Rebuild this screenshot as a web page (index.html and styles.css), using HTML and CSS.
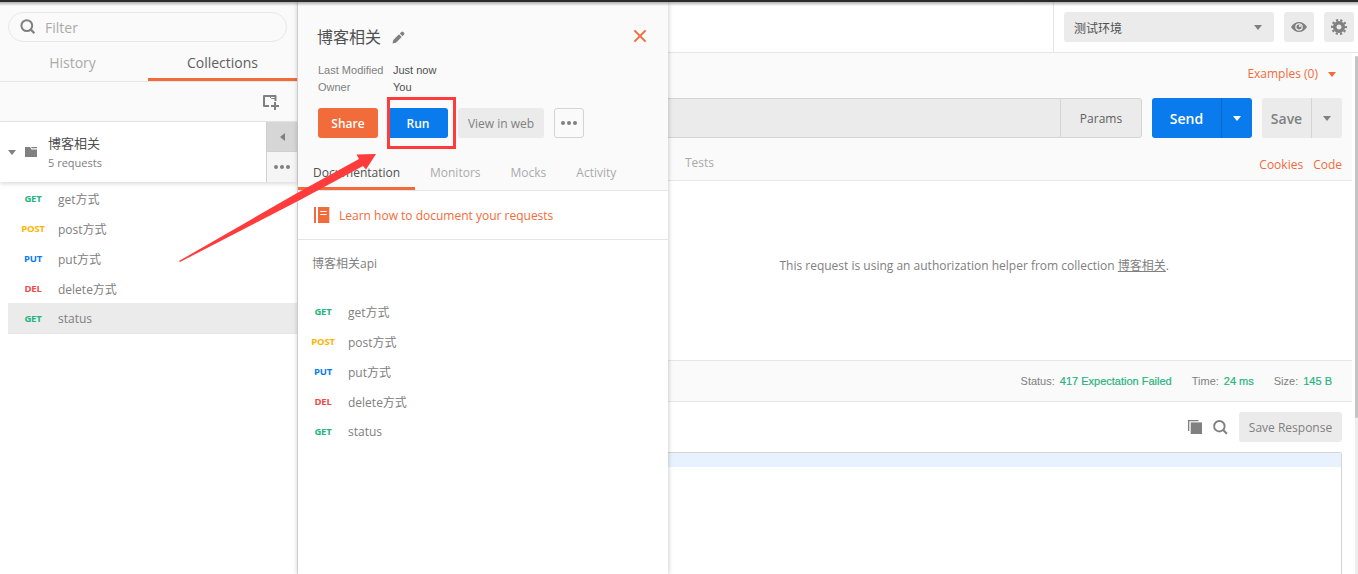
FILE: index.html
```
<!DOCTYPE html>
<html lang="zh">

<head>
  <meta charset="utf-8">
  <title>Collections</title>
  <link rel="stylesheet" href="styles.css">
</head>

<body>
  <div class="app">

    <div class="sidebar">
      <div class="filter">
        <svg width="16" height="16" viewBox="0 0 16 16"><circle cx="6.8" cy="6.6" r="5.4" fill="none" stroke="#808080" stroke-width="2"/><path d="M10.6 10.4L14.4 14.2" stroke="#808080" stroke-width="2.2"/></svg>
        <span>Filter</span>
      </div>
      <div class="sidebar-tabs">
        <div class="sidebar-tab">History</div>
        <div class="sidebar-tab active">Collections</div>
      </div>
      <div class="sidebar-tools">
        <svg width="16" height="15" viewBox="0 0 16 15" fill="none" stroke="#808080"><path d="M6 11H1V1H12.500V6" stroke-width="2" stroke-linejoin="round"/><path d="M6.500 1.500L8.500 3.500H12" stroke-width="1"/><path d="M12 7V15M8 11H16" stroke-width="2"/></svg>
      </div>
      <div class="collection">
        <i class="caret"></i>
        <svg class="folder" width="12" height="10" viewBox="0 0 12 10" fill="#808080"><path d="M0 0H5L6.5 2.5H12V10H0Z"/><path d="M6 0H12V1.2H6.8Z"/></svg>
        <div class="collection-info">
          <div class="collection-name">博客相关</div>
          <div class="collection-count">5 requests</div>
        </div>
        <div class="collection-actions">
          <div class="collapse"><i class="caret-left"></i></div>
          <div class="more"><i class="dots"><b></b><b></b><b></b></i></div>
        </div>
      </div>
      <div class="requests">
        <div class="request"><span class="method get">GET</span><span>get方式</span></div>
        <div class="request"><span class="method post">POST</span><span>post方式</span></div>
        <div class="request"><span class="method put">PUT</span><span>put方式</span></div>
        <div class="request"><span class="method del">DEL</span><span>delete方式</span></div>
        <div class="request selected"><span class="method get">GET</span><span>status</span></div>
      </div>
    </div>

    <div class="panel">
      <div class="panel-head">
        <div class="panel-title">
          <span>博客相关</span>
          <svg class="pencil" width="13" height="13" viewBox="0 0 13 13" fill="#808080"><path d="M0.5 12.5L1.3 9L7 3.3L9.7 6L4 11.7Z"/><path d="M7.8 2.5L9.4 0.9Q10.3 0.2 11.2 0.9L12.1 1.8Q12.8 2.7 12.1 3.6L10.5 5.2Z"/></svg>
          <svg class="close" width="14" height="14" viewBox="0 0 14 14"><path d="M1.4 1.4L12.6 12.6M12.6 1.4L1.4 12.6" stroke="#f26b3a" stroke-width="2"/></svg>
        </div>
        <div class="meta">
          <span>Last Modified</span><b>Just now</b>
          <span>Owner</span><b>You</b>
        </div>
        <div class="panel-buttons">
          <div class="btn share">Share</div>
          <div class="btn run">Run</div>
          <div class="btn view">View in web</div>
          <div class="btn options"><i class="dots"><b></b><b></b><b></b></i></div>
        </div>
        <div class="panel-tabs">
          <div class="panel-tab active">Documentation</div>
          <div class="panel-tab">Monitors</div>
          <div class="panel-tab">Mocks</div>
          <div class="panel-tab">Activity</div>
        </div>
      </div>
      <div class="learn">
        <svg width="16" height="16" viewBox="0 0 16 16"><path d="M0 0H2V16H0ZM4 0H15.3V16H4Z" fill="#f26b3a"/><path d="M6.3 4.5H12.7M6.3 7.5H12.7" stroke="#fff"/></svg>
        <span>Learn how to document your requests</span>
      </div>
      <div class="description">博客相关api</div>
      <div class="panel-requests">
        <div class="request"><span class="method get">GET</span><span>get方式</span></div>
        <div class="request"><span class="method post">POST</span><span>post方式</span></div>
        <div class="request"><span class="method put">PUT</span><span>put方式</span></div>
        <div class="request"><span class="method del">DEL</span><span>delete方式</span></div>
        <div class="request"><span class="method get">GET</span><span>status</span></div>
      </div>
    </div>

    <div class="main">
      <div class="topbar">
        <div class="environment">
          <div class="env-select"><span>测试环境</span><i class="caret"></i></div>
          <div class="icon-btn">
            <svg width="16" height="10" viewBox="0 0 16 10"><path d="M0 5Q3.2 0 8 0T16 5Q12.8 10 8 10T0 5Z" fill="#808080"/><circle cx="8" cy="5" r="3.2" fill="none" stroke="#ebebeb" stroke-width="1.2"/><circle cx="9" cy="4" r="1.1" fill="#ebebeb"/></svg>
          </div>
          <div class="icon-btn">
            <svg width="16" height="16" viewBox="-8 -8 16 16"><circle r="4.3" fill="none" stroke="#808080" stroke-width="3.6"/><circle r="6.9" fill="none" stroke="#808080" stroke-width="2.2" stroke-dasharray="2.2 2.135" stroke-dashoffset="1.1"/></svg>
          </div>
        </div>
      </div>
      <div class="content">
        <div class="builder">
          <div class="examples"><span>Examples (0)</span><i class="caret"></i></div>
          <div class="url-row">
            <div class="url"></div>
            <div class="params">Params</div>
            <div class="split send"><span>Send</span><div><i class="caret"></i></div></div>
            <div class="split save"><span>Save</span><div><i class="caret"></i></div></div>
          </div>
          <div class="builder-tabs">
            <span class="tests">Tests</span>
            <span class="link">Cookies</span>
            <span class="link">Code</span>
          </div>
        </div>
        <div class="auth"><p>This request is using an authorization helper from collection <u>博客相关</u>.</p></div>
        <div class="status">
          <span>Status:<b>417 Expectation Failed</b></span>
          <span>Time:<b>24 ms</b></span>
          <span>Size:<b>145 B</b></span>
        </div>
        <div class="response">
          <div class="response-tools">
            <svg width="14" height="14" viewBox="0 0 14 14" fill="#808080"><path d="M0 0H10.5V1.3H1.3V11H0Z"/><path d="M2.7 2.4H14V14H2.7Z"/></svg>
            <svg width="15" height="15" viewBox="0 0 16 16"><circle cx="6.8" cy="6.6" r="5.6" fill="none" stroke="#808080" stroke-width="2"/><path d="M10.6 10.4L14.8 14.6" stroke="#808080" stroke-width="2.2"/></svg>
            <div class="btn view">Save Response</div>
          </div>
          <div class="editor"><div class="line"></div></div>
        </div>
      </div>
      <div class="scrollbar"><div class="thumb"></div></div>
    </div>

    <div class="highlight"></div>
    <svg class="arrow" width="200" height="112" viewBox="0 0 200 112"><path d="M1 110L120 41.500L181 8L178.500 3.500L198 3L188 18.500L185 15L122 49L2 111Z" fill="#ff3b3b"/></svg>
  </div>
</body>

</html>
```
FILE: styles.css
```
* {
  box-sizing: border-box;
}

body {
  margin: 0;
  font: 12px "Open Sans", "Noto Sans CJK SC", sans-serif;
  color: #808080;
  background: #fff;
}

svg {
  display: block;
  flex: none;
}

.app {
  position: relative;
  display: flex;
  height: 574px;
  border-top: 2px solid #2d2a2a;
  overflow: hidden;
}
.app::before {
  content: "";
  position: absolute;
  z-index: 3;
  top: 0;
  left: 0;
  right: 0;
  height: 4px;
  background: linear-gradient(rgba(0, 0, 0, .3), rgba(0, 0, 0, 0));
}

.caret {
  flex: none;
  border: 4px solid transparent;
  border-top: 5px solid #808080;
  border-bottom: 0;
}
.caret-left {
  border: 4px solid transparent;
  border-right: 5px solid #808080;
  border-left: 0;
}
.dots {
  display: flex;
  gap: 2px;
}
.dots b {
  width: 4px;
  height: 4px;
  border-radius: 50%;
  background: #808080;
}

/* sidebar */
.sidebar {
  flex: none;
  width: 298px;
  padding-top: 10px;
  border-right: 1px solid #e6e6e6;
  background: #fafafa;
  display: flex;
  flex-direction: column;
}
.filter {
  height: 30px;
  margin: 0 10px 0 8px;
  padding: 0 11px;
  border: 1px solid #e8e8e8;
  border-radius: 15px;
  display: flex;
  align-items: center;
  gap: 9px;
  font-size: 14px;
  color: #aaa;
}
.sidebar-tabs {
  display: flex;
  height: 40px;
  border-bottom: 1px solid #e6e6e6;
  font-size: 14px;
  line-height: 42px;
  text-align: center;
  color: #aaa;
}
.sidebar-tab {
  width: 148px;
  padding-right: 3px;
}
.sidebar-tab.active {
  width: 149px;
  padding: 0;
  height: 39px;
  border-bottom: 3px solid #f26b3a;
  color: #606060;
}
.sidebar-tools {
  height: 40px;
  padding: 13px 18px 0 0;
  border-bottom: 1px solid #e6e6e6;
  display: flex;
  justify-content: flex-end;
}
.collection {
  position: relative;
  flex: none;
  height: 60px;
  padding-left: 8px;
  background: #fff;
  box-shadow: 0 2px 4px rgba(0, 0, 0, .14);
  display: flex;
  align-items: center;
}
.collection-info {
  flex: 1;
  margin-left: 11px;
  padding-top: 1px;
}
.folder {
  margin-left: 9px;
}
.collection-name {
  font-size: 13px;
  line-height: 20px;
  color: #505050;
}
.collection-count {
  font-size: 11px;
  line-height: 20px;
}
.collection-actions {
  width: 31px;
  height: 60px;
  border-left: 1px solid #d0d0d0;
}
.collection-actions div {
  height: 30px;
  display: flex;
  align-items: center;
  justify-content: center;
  background: #f5f5f5;
}
.collection-actions .collapse {
  border-bottom: 1px solid #d0d0d0;
  background: #d6d6d6;
}
.requests {
  flex: 1;
  padding: 1px 0 0 8px;
  background: #fff;
}
.request {
  height: 30px;
  display: flex;
  align-items: center;
  padding-top: 1px;
}
.request.selected {
  height: 31px;
  border-bottom: 1px solid #e6e6e6;
  background: #ebebeb;
}
.method {
  width: 50px;
  text-align: center;
  font-size: 9.5px;
  font-weight: 700;
  letter-spacing: -.2px;
}
.method.get { color: #26b47f; }
.method.post { color: #ffb400; }
.method.put { color: #097bed; }
.method.del { color: #ed4b48; }

/* collection details */
.panel {
  position: relative;
  z-index: 1;
  flex: none;
  width: 370px;
  background: #fff;
  box-shadow: 0 0 5px rgba(0, 0, 0, .25);
}
.panel-head {
  height: 189px;
  border-bottom: 1px solid #e6e6e6;
  background: #fafafa;
}
.panel-title {
  display: flex;
  align-items: center;
  gap: 11px;
  height: 60px;
  padding: 7px 21px 0 19px;
  font-size: 16px;
  color: #505050;
}
.pencil {
  margin-top: 4px;
}
.close {
  margin-left: auto;
}
.meta {
  display: grid;
  grid-template-columns: 75px auto;
  align-content: start;
  height: 46px;
  padding-left: 20px;
  font: 11px/17px "Liberation Sans", sans-serif;
}
.meta b {
  font-weight: 400;
  color: #505050;
}
.panel-buttons {
  display: flex;
  gap: 10px;
  padding-left: 20px;
}
.btn {
  width: 60px;
  height: 30px;
  border-radius: 3px;
  line-height: 31px;
  text-align: center;
  color: #fff;
}
.share {
  background: #f26b3a;
  font-weight: 600;
}
.run {
  background: #097bed;
  font-weight: 600;
}
.view {
  width: 86px;
  background: #ebebeb;
  color: #808080;
}
.options {
  display: flex;
  align-items: center;
  justify-content: center;
  width: 30px;
  border: 1px solid #d4d4d4;
}
.panel-tabs {
  display: flex;
  height: 52px;
  color: #aaa;
  line-height: 70px;
}
.panel-tab {
  margin-right: 30px;
}
.panel-tab.active {
  width: 117px;
  margin-right: 15px;
  padding-left: 15px;
  border-bottom: 3px solid #f26b3a;
  color: #505050;
}
.learn {
  display: flex;
  align-items: center;
  gap: 9px;
  height: 49px;
  padding-left: 16px;
  border-bottom: 1px solid #e6e6e6;
  color: #f26b3a;
}
.description {
  height: 56px;
  padding-left: 14px;
  line-height: 48px;
}

/* request builder */
.main {
  flex: 1;
  display: grid;
  grid-template-columns: 1fr 6px;
  grid-template-rows: 51px 1fr;
}
.topbar {
  grid-column: 1 / 3;
  display: flex;
  justify-content: flex-end;
  border-bottom: 1px solid #e6e6e6;
}
.environment {
  display: flex;
  gap: 10px;
  padding: 10px 4px 0 10px;
  border-left: 1px solid #e6e6e6;
}
.env-select {
  display: flex;
  align-items: center;
  justify-content: space-between;
  width: 210px;
  height: 30px;
  padding: 0 12px 0 10px;
  border-radius: 3px;
  background: #ebebeb;
  color: #505050;
}
.env-select span {
  padding-top: 2px;
}
.icon-btn {
  display: flex;
  align-items: center;
  justify-content: center;
  width: 30px;
  height: 30px;
  border-radius: 3px;
  background: #ebebeb;
}
.content {
  display: flex;
  flex-direction: column;
}
.builder {
  height: 128px;
  border-bottom: 1px solid #e6e6e6;
  background: #fafafa;
}
.examples {
  display: flex;
  align-items: center;
  justify-content: flex-end;
  gap: 10px;
  height: 45px;
  padding: 0 16px 3px 0;
  color: #f26b3a;
}
.examples span {
  padding-bottom: 2px;
}
.examples .caret {
  border-top-color: #f26b3a;
}
.url-row {
  display: flex;
  height: 40px;
  padding-right: 10px;
}
.url {
  flex: 1;
  border: 1px solid #d4d4d4;
  border-width: 1px 0;
  background: #ebebeb;
}
.params {
  width: 82px;
  border: 1px solid #d4d4d4;
  border-radius: 0 3px 3px 0;
  background: #ebebeb;
  color: #606060;
  line-height: 40px;
  text-align: center;
}
.split {
  display: flex;
  margin-left: 10px;
  border-radius: 3px;
  font-size: 14px;
  font-weight: 600;
  line-height: 41px;
  text-align: center;
}
.split span {
  flex: 1;
}
.split div {
  display: flex;
  align-items: center;
  justify-content: center;
  width: 31px;
  border-left: 1px solid #d4d4d4;
}
.send {
  width: 100px;
  background: #097bed;
  color: #fff;
}
.send div {
  border-color: #0869cb;
}
.send .caret {
  border-top-color: #fff;
}
.save {
  width: 80px;
  background: #ebebeb;
}
.builder-tabs {
  display: flex;
  gap: 10px;
  padding: 0 10px 0 17px;
  line-height: 54px;
}
.tests {
  flex: 1;
  line-height: 50px;
  color: #aaa;
}
.link {
  color: #f26b3a;
}
.auth {
  height: 179px;
  padding: 76px 183px 0 0;
  text-align: right;
}
.auth p {
  margin: 0;
  line-height: 17px;
}
.status {
  display: flex;
  justify-content: flex-end;
  gap: 20px;
  height: 42px;
  padding-right: 20px;
  border: 1px solid #e6e6e6;
  border-width: 1px 0;
  background: #fafafa;
  font: 11px/40px "Liberation Sans", sans-serif;
}
.status b {
  margin-left: 5px;
  color: #26b47f;
  font-weight: 400;
  -webkit-text-stroke: .2px #26b47f;
}
.response {
  flex: 1;
  display: flex;
  flex-direction: column;
  padding-right: 10px;
}
.response-tools {
  display: flex;
  align-items: center;
  justify-content: flex-end;
  gap: 11px;
  height: 50px;
}
.response-tools .btn {
  width: 103px;
}
.editor {
  flex: 1;
  border: 1px solid #d4d4d4;
  border-width: 1px 1px 0 0;
  border-radius: 0 3px 0 0;
}
.line {
  height: 14px;
  background: #e8f2fe;
}
.scrollbar {
  margin: 3px 0 0 3px;
  background: #eee;
}
.thumb {
  height: 362px;
  border-radius: 2px;
  background: #c4c4c4;
}

/* pointer to the Run button */
.highlight {
  position: absolute;
  z-index: 4;
  left: 387px;
  top: 95px;
  width: 69px;
  height: 52px;
  border: 3px solid #ff3b3b;
}
.arrow {
  position: absolute;
  z-index: 4;
  left: 178px;
  top: 149px;
}
```
